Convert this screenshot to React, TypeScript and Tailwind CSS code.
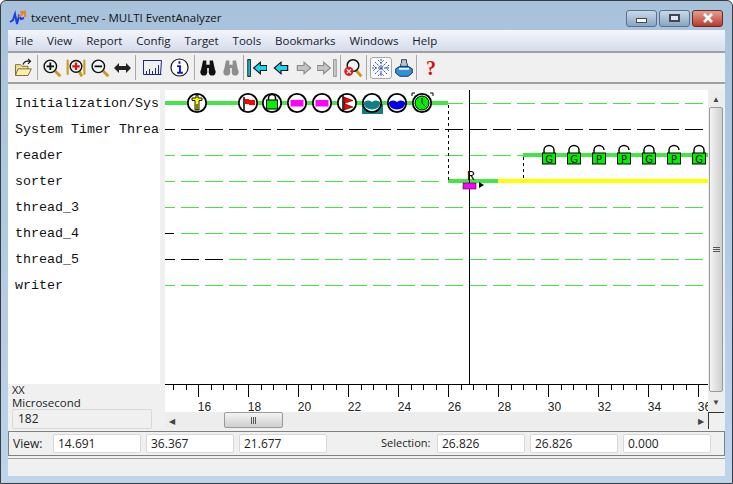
import type { ReactNode } from "react";

const threads = [
  "Initialization/System",
  "System Timer Thread",
  "reader",
  "sorter",
  "thread_3",
  "thread_4",
  "thread_5",
  "writer",
];
const menus = ["File", "View", "Report", "Config", "Target", "Tools", "Bookmarks", "Windows", "Help"];

function Glyph({ children }: { children: ReactNode }) {
  return (
    <svg width="20" height="20" viewBox="0 0 24 24" fill="none">
      {children}
    </svg>
  );
}

function Lens({ mark }: { mark: "plus" | "minus" }) {
  return (
    <Glyph>
      <path d="M16 16l6 6" stroke="#c79a1e" strokeWidth="3.500" />
      <circle cx="10" cy="10" r="7.500" fill="#eef4fb" stroke="#111" strokeWidth="1.700" />
      <path d={mark === "plus" ? "M5.500 10h9M10 5.500v9" : "M5.500 10h9"} stroke="#111" strokeWidth="2.200" />
    </Glyph>
  );
}

function Binoculars({ color }: { color: string }) {
  return (
    <Glyph>
      <path d="M6 3h4v5h4V3h4l3 14h-8v-5h-2v5H3z" fill={color} />
      <circle cx="7" cy="17" r="4" fill={color} />
      <circle cx="17" cy="17" r="4" fill={color} />
    </Glyph>
  );
}

function Arrow({ dir, fill, stroke, bar }: { dir: "l" | "r"; fill: string; stroke: string; bar?: boolean }) {
  const d = dir === "l" ? "M4 12l8-7v4h8v6h-8v4z" : "M20 12l-8-7v4H4v6h8v4z";
  const shift = bar ? (dir === "l" ? 4 : -4) : 0;
  return (
    <Glyph>
      {bar && <rect x={dir === "l" ? 1 : 20} y="2" width="3" height="20" fill={dir === "l" ? fill : "#dadada"} stroke={stroke} strokeWidth="1.200" />}
      <path d={d} fill={fill} stroke={stroke} strokeWidth="1.400" transform={`translate(${shift} 0)`} />
    </Glyph>
  );
}

function ToolBtn({ className, children }: { className: string; children: ReactNode }) {
  return <div className={`flex h-6 shrink-0 items-center justify-center ${className}`}>{children}</div>;
}

function Sep({ className = "" }: { className?: string }) {
  return <div className={`h-[25px] w-px shrink-0 bg-[#a8a8a8] ${className}`} />;
}

function Toolbar() {
  return (
    <div className="flex h-[33px] items-center border-t-2 border-b-2 border-t-[#a0a0a0] border-b-[#a0a0a0] bg-[#f0f0f0] pl-[3px]">
      <ToolBtn className="w-[24px]">
        <Glyph>
          <path d="M3 8h6l2 2h7v10H3z" fill="#f5e08a" stroke="#6a5a20" />
          <path d="M3 21l3-8h16l-4 8z" fill="#fbeeb0" stroke="#6a5a20" />
          <path d="M12 8c1-3 4-5 8-4M18 1l3 3-3 3" stroke="#222" strokeWidth="1.500" />
        </Glyph>
      </ToolBtn>
      <Sep className="mx-[2px]" />
      <ToolBtn className="w-[24px]"><Lens mark="plus" /></ToolBtn>
      <ToolBtn className="w-[24px]">
        <Glyph>
          <path d="M2 2v18M22 2v18" stroke="#c79a1e" strokeWidth="2.500" />
          <path d="M16 16l3 6" stroke="#c79a1e" strokeWidth="3.500" />
          <circle cx="12" cy="10" r="7" fill="#eef4fb" stroke="#111" strokeWidth="1.700" />
          <path d="M7.500 10h9M12 5.500v9" stroke="#e01010" strokeWidth="2.800" />
        </Glyph>
      </ToolBtn>
      <ToolBtn className="w-[23px]"><Lens mark="minus" /></ToolBtn>
      <ToolBtn className="w-[23px]">
        <svg width="17" height="10" viewBox="0 0 17 10">
          <path d="M0 5l5-5v3h7V0l5 5-5 5V7H5v3z" fill="#222" />
        </svg>
      </ToolBtn>
      <Sep className="mr-[3px] ml-px" />
      <ToolBtn className="w-[27px]">
        <svg width="19" height="15" viewBox="0 0 19 15" fill="none">
          <path d="M.5 0v14.500h18" stroke="#1a2a8a" />
          <path d="M.5 .5h18l-1 14" stroke="#1a2a8a" />
          <path d="M3.500 14v-3M6.500 14V9M9.500 14v-3M12.500 14V8M15.500 14V5" stroke="#1a2a8a" />
        </svg>
      </ToolBtn>
      <ToolBtn className="w-[27px]">
        <svg width="19" height="19" viewBox="0 0 20 20" fill="none">
          <circle cx="10" cy="10" r="9" fill="#fff" stroke="#111" strokeWidth="1.200" />
          <path d="M10 3.500v2.500M7.500 8.500h3v7M7.500 15.500h6" stroke="#1414c8" strokeWidth="2" />
        </svg>
      </ToolBtn>
      <Sep className="mr-px ml-px" />
      <ToolBtn className="w-[24px]"><Binoculars color="#111" /></ToolBtn>
      <ToolBtn className="w-[21px]"><Binoculars color="#8e8e8e" /></ToolBtn>
      <Sep className="mr-px ml-[2px]" />
      <ToolBtn className="w-[24px]"><Arrow dir="l" fill="#18d8f0" stroke="#111" bar /></ToolBtn>
      <ToolBtn className="w-[23px]"><Arrow dir="l" fill="#18d8f0" stroke="#111" /></ToolBtn>
      <ToolBtn className="w-[23px]"><Arrow dir="r" fill="#c4c4c4" stroke="#8a8a8a" /></ToolBtn>
      <ToolBtn className="w-[23px]"><Arrow dir="r" fill="#c4c4c4" stroke="#8a8a8a" bar /></ToolBtn>
      <Sep className="mr-px ml-[2px]" />
      <ToolBtn className="w-[22px]">
        <Glyph>
          <path d="M16 15l6 7" stroke="#c79a1e" strokeWidth="3.500" />
          <circle cx="12" cy="9" r="7" fill="#eef4fb" stroke="#111" strokeWidth="1.700" />
          <circle cx="7" cy="16" r="5.500" fill="#e01818" />
          <path d="M4.500 13.500l5 5M9.500 13.500l-5 5" stroke="#fff" strokeWidth="1.500" />
        </Glyph>
      </ToolBtn>
      <Sep className="mr-[3px] ml-[2px]" />
      <ToolBtn className="h-[22px] w-[22px] rounded-[3px] border border-[#a8a8a8] bg-[#fbfbfb]">
        <svg width="18" height="18" viewBox="0 0 18 18" fill="none" stroke="#2a50c8" strokeWidth="1" strokeDasharray="2 1">
          <path d="M9 0v18M0 9h18M3 3l12 12M15 3L3 15M6 1l3 3 3-3M6 17l3-3 3 3M1 6l3 3-3 3M17 6l-3 3 3 3" />
        </svg>
      </ToolBtn>
      <ToolBtn className="ml-px w-[22px]">
        <Glyph>
          <path d="M9 2h6v4l1 1v4H8V7l1-1z" fill="#b8c4d0" stroke="#223" />
          <path d="M2 13l5-3h10l5 3v5l-5 4H7l-5-4z" fill="#2f8fd8" stroke="#123" />
          <path d="M6 13h12" stroke="#eaf6ff" strokeWidth="2" />
        </Glyph>
      </ToolBtn>
      <Sep className="mr-px ml-px" />
      <ToolBtn className="w-[26px]">
        <span className="font-['Liberation_Serif',serif] text-[20px] leading-none font-bold text-[#d81010]">?</span>
      </ToolBtn>
    </div>
  );
}

const px = (n: number) => n - 165;

function Dashes({ y, color, from = 181, to = 703, head }: { y: number; color: string; from?: number; to?: number; head?: boolean }) {
  const segs: ReactNode[] = [];
  if (head) segs.push(<rect key="h" x={0} y={y} width={10} height={1} fill={color} />);
  for (let x = 181; x < to; x += 24) {
    if (x + 18 <= from) continue;
    const x0 = Math.max(x, from);
    segs.push(<rect key={x} x={px(x0)} y={y} width={Math.min(x + 18, to) - x0} height={1} fill={color} />);
  }
  return <>{segs}</>;
}

const GREEN = "#44e544";
const BRIGHT = "#00f000";

function StateIcon({ cx, children }: { cx: number; children: ReactNode }) {
  return (
    <g transform={`translate(${px(cx)} 12)`}>
      <circle r="9.200" fill="#fff" stroke="#000" strokeWidth="1.800" />
      {children}
    </g>
  );
}

function Lock({ cx, letter }: { cx: number; letter: string }) {
  const open = letter === "P";
  return (
    <g transform={`translate(${px(cx)} 63)`}>
      <path
        d={open ? "M-5 -1v-3a5 4.500 0 0 1 10 0" : "M-5 -1v-3a5 4.500 0 0 1 10 0v3"}
        fill="none"
        stroke="#000"
        strokeWidth="1.400"
      />
      <rect x="-6.500" y="-1" width="13" height="11" fill={BRIGHT} stroke="#000" />
      <text x="0" y="8.500" textAnchor="middle" className="font-['DejaVu_Sans',sans-serif] text-[10px]" fill="#000">
        {letter}
      </text>
    </g>
  );
}

const WAVE = "M-8.500 0C-6 -3 -3 -3 0 -1C3 -3 6 -3 8.500 0A8.800 8.800 0 0 1 -8.500 0Z";

function Timeline() {
  return (
    <svg width="543" height="294" viewBox="0 0 543 294" className="block bg-white">
      <g transform="translate(0 1)">
        {/* row 0 */}
        <rect x="0" y="10" width="283" height="4" fill={GREEN} />
        <Dashes y={12} color={GREEN} from={453} />
        <rect x="283" y="12" width="5" height="1" fill={GREEN} />
        {/* row 1 */}
        <Dashes y={38} color="#000" head />
        {/* row 2 */}
        <Dashes y={64} color={GREEN} to={523} head />
        <rect x={px(523)} y="62" width="185" height="4" fill={GREEN} />
        {/* row 3 */}
        <Dashes y={90} color={GREEN} to={445} head />
        <rect x={px(448)} y="88" width="50" height="4" fill={GREEN} />
        <rect x={px(498)} y="88" width="210" height="4" fill="#ffff00" />
        {/* rows 4-7 */}
        <Dashes y={116} color={GREEN} head />
        <Dashes y={142} color={GREEN} />
        <rect x="0" y="142" width="9" height="1" fill="#000" />
        <Dashes y={168} color={GREEN} from={229} />
        <rect x="0" y="168" width="10" height="1" fill="#000" />
        <rect x="16" y="168" width="18" height="1" fill="#000" />
        <rect x="40" y="168" width="18" height="1" fill="#000" />
        <Dashes y={194} color={GREEN} head />

        {/* thread switch lines */}
        <path d={`M${px(448) + 0.5} 14V90`} stroke="#000" strokeDasharray="3 3" />
        <path d={`M${px(523) + 0.5} 66V90`} stroke="#000" strokeDasharray="3 3" />

        <StateIcon cx={197}>
          <path d="M-1 -8h2v3h4v2.500h-3v9.500h-4v-9.500h-3v-2.500h4z" fill="#ffff00" stroke="#000" strokeWidth="0.900" />
          <path d="M0 1v6" stroke="#000" />
        </StateIcon>
        <StateIcon cx={248}>
          <path d="M-4 -6v13" stroke="#000" strokeWidth="1.500" />
          <path d="M-3 -4h4v1h6v5h-6v-1h-4z" fill="#ff0000" />
        </StateIcon>
        <StateIcon cx={272}>
          <path d="M-3.500 -3v-2a3.500 3.500 0 0 1 7 0v2" fill="none" stroke="#000" strokeWidth="1.500" />
          <rect x="-5.500" y="-3" width="11" height="9" fill={BRIGHT} stroke="#000" />
        </StateIcon>
        <StateIcon cx={297}>
          <rect x="-6.500" y="-3" width="13" height="6.500" fill="#ff00ff" />
        </StateIcon>
        <StateIcon cx={322}>
          <rect x="-6.500" y="-3" width="13" height="6.500" fill="#ff00ff" />
        </StateIcon>
        <StateIcon cx={347}>
          <path d="M-4 -8v16" stroke="#000" strokeWidth="1.500" />
          <path d="M-3 -6l9 3.500-9 3zM-3 0.500l9 3.500-9 3z" fill="#ff0000" stroke="#000" strokeWidth="0.500" />
        </StateIcon>
        <rect x={px(362)} y="13" width="21" height="10" fill="#0f7f86" />
        <StateIcon cx={372}>
          <path d={WAVE} fill="#0f7f86" />
        </StateIcon>
        <StateIcon cx={397}>
          <path d={WAVE} fill="#0000e8" />
        </StateIcon>
        <StateIcon cx={422}>
          <circle r="7" fill={BRIGHT} stroke="#000" strokeWidth="1" />
          <path d="M0 -5v5l4 4" stroke="#000" strokeWidth="1" fill="none" />
        </StateIcon>
        <path d={`M${px(412)} 5v-3h3M${px(433)} 5v-3h-3`} stroke="#000" fill="none" />

        {[["G", 549], ["G", 574], ["P", 599], ["P", 624], ["G", 649], ["P", 674], ["G", 699]].map(([l, x]) => (
          <Lock key={x} cx={x as number} letter={l as string} />
        ))}

        {/* cursor */}
        <rect x={px(469)} y="-1" width="1" height="294" fill="#000" />
        <text x={px(471)} y="89" textAnchor="middle" className="font-['Liberation_Mono',monospace] text-[13px]" fill="#000">
          R
        </text>
        <rect x={px(463)} y="92" width="13" height="6" fill="#ff00ff" stroke="#000" strokeWidth="0.500" />
        <path d={`M${px(479)} 91l5 3-5 3z`} fill="#000" />
      </g>
    </svg>
  );
}

function Axis() {
  const ticks: ReactNode[] = [];
  for (let i = -2; i < 44; i++) {
    const x = 33 + i * 12.5;
    if (x < 0 || x > 543) continue;
    const major = i % 4 === 0;
    ticks.push(<rect key={i} x={Math.round(x)} y="0" width="1" height={major ? 13 : 6} fill="#000" />);
  }
  const labels = [16, 18, 20, 22, 24, 26, 28, 30, 32, 34, 36];
  return (
    <svg width="543" height="28" viewBox="0 0 543 28" className="block bg-white">
      <rect x="0" y="0" width="543" height="1" fill="#000" />
      {ticks}
      {labels.map((n, i) => (
        <text
          key={n}
          x={39.5 + i * 50}
          y="27"
          textAnchor="middle"
          className="font-['Liberation_Sans',sans-serif] text-[12px]"
          fill="#222"
        >
          {n}
        </text>
      ))}
    </svg>
  );
}

function VScrollbar() {
  return (
    <div className="flex h-full w-[16px] shrink-0 flex-col items-center bg-[#ededed]">
      <div className="flex h-[17px] w-full items-center justify-center text-[8px] leading-none text-[#444]">▲</div>
      <div className="h-[285px] w-[14px] rounded-[2px] border border-[#9a9a9a] bg-gradient-to-r from-[#f4f4f4] to-[#cfcfcf]">
        <div className="flex h-full flex-col items-center justify-center gap-px">
          <div className="h-px w-[7px] bg-[#555]" />
          <div className="h-px w-[7px] bg-[#555]" />
          <div className="h-px w-[7px] bg-[#555]" />
        </div>
      </div>
      <div className="flex h-[20px] w-full items-center justify-center text-[8px] leading-none text-[#444]">▼</div>
    </div>
  );
}

function HScrollbar() {
  return (
    <div className="relative flex h-[17px] items-center justify-between bg-[#ededed] px-[4px] text-[8px] leading-none text-[#444]">
      <span>◀</span>
      <div className="absolute top-0 left-[59px] flex h-[16px] w-[59px] items-center justify-center gap-px rounded-[2px] border border-[#9a9a9a] bg-gradient-to-b from-[#f4f4f4] to-[#cfcfcf]">
        <div className="h-[7px] w-px bg-[#555]" />
        <div className="h-[7px] w-px bg-[#555]" />
        <div className="h-[7px] w-px bg-[#555]" />
      </div>
      <span>▶</span>
    </div>
  );
}

function Field({ value, className }: { value: string; className: string }) {
  return (
    <div className={`flex h-[19px] items-center rounded-[2px] border border-[#d8d8d8] bg-white pl-[4px] text-[12px] text-[#222] ${className}`}>
      {value}
    </div>
  );
}

export default function App() {
  return (
    <div className="flex h-[484px] w-[733px] flex-col overflow-hidden rounded-t-[6px] border border-[#3c3c3c] bg-gradient-to-b from-[#a8c2dc] to-[#bcd4ec] font-['Open_Sans','Liberation_Sans',sans-serif]">
      {/* Title bar */}
      <div className="flex h-[29px] shrink-0 items-center pt-[5px] pl-[8px]">
        <svg width="18" height="18" viewBox="0 0 18 18" fill="none">
          <path d="M1 13l3-2 2-6 2 10 2-8 2 3 3-1" stroke="#1c3fe0" strokeWidth="2" />
          <path d="M16 2l-6 6M11 3h5v5" stroke="#f08020" strokeWidth="2" />
        </svg>
        <span className="ml-[4px] text-[11.500px] text-[#111]">txevent_mev - MULTI EventAnalyzer</span>
        <div className="ml-auto flex gap-[2px] pr-[9px]">
          <div className="flex h-[17px] w-[31px] items-end justify-center rounded-[3px] border border-[#5a6f88] bg-gradient-to-b from-[#c9d9ea] to-[#8aa5c2] pb-[3px]">
            <div className="h-[5px] w-[11px] border border-[#445] bg-white" />
          </div>
          <div className="flex h-[17px] w-[31px] items-center justify-center rounded-[3px] border border-[#5a6f88] bg-gradient-to-b from-[#c9d9ea] to-[#8aa5c2]">
            <div className="h-[8px] w-[11px] border-2 border-[#445] bg-[#dfe8f2]" />
          </div>
          <div className="flex h-[17px] w-[31px] items-center justify-center rounded-[3px] border border-[#6e2a22] bg-gradient-to-b from-[#e0a090] to-[#b8382c]">
            <svg width="12" height="10" viewBox="0 0 12 10">
              <path d="M2 1l8 8M10 1l-8 8" stroke="#fff" strokeWidth="2.600" />
            </svg>
          </div>
        </div>
      </div>

      {/* Client area */}
      <div className="mx-[7px] flex min-h-0 flex-1 flex-col bg-[#f0f0f0]">
        <div className="flex h-[21px] shrink-0 items-center gap-[13.900px] bg-gradient-to-b from-[#f4f6fb] to-[#d6dcee] pl-[7px] text-[11.500px] text-[#1a1a2a]">
          {menus.map((m) => (
            <span key={m}>{m}</span>
          ))}
        </div>
        <Toolbar />

        <div className="mt-[6px] flex h-[339px] shrink-0">
          {/* Thread names */}
          <div className="flex w-[152px] shrink-0 flex-col">
            <div className="h-[294px] overflow-hidden bg-white pt-[1px] pl-[7px] font-['Liberation_Mono',monospace] text-[13.330px] whitespace-nowrap text-[#111]">
              {threads.map((t) => (
                <div key={t} className="flex h-[26px] items-center overflow-hidden">
                  {t}
                </div>
              ))}
            </div>
            <div className="flex flex-1 flex-col pl-[4px] text-[11.500px] leading-none text-[#222]">
              <span className="text-[11px] leading-[12px]">XX</span>
              <span className="leading-[13px]">Microsecond</span>
              <div className="flex h-[20px] w-[140px] flex-1 items-center rounded-[2px] border border-[#d8d8d8] pl-[5px] text-[12px]">182</div>
            </div>
          </div>

          {/* Chart column */}
          <div className="ml-[5px] flex min-w-0 flex-1 flex-col">
            <div className="flex h-[322px] shrink-0">
              <div className="flex w-[543px] shrink-0 flex-col">
                <Timeline />
                <Axis />
              </div>
              <VScrollbar />
            </div>
            <div className="flex">
              <div className="w-[543px] shrink-0">
                <HScrollbar />
              </div>
              <div className="h-[17px] w-[16px] border-t border-l border-[#333]" />
            </div>
          </div>
        </div>

        {/* View / selection bar */}
        <div className="mt-[2px] flex h-[25px] shrink-0 items-center border border-[#808080] pl-[4px] text-[12px] text-[#222]">
          <span className="w-[40px]">View:</span>
          <Field value="14.691" className="w-[88px]" />
          <Field value="36.367" className="ml-[5px] w-[88px]" />
          <Field value="21.677" className="ml-[5px] w-[88px]" />
          <span className="ml-[54px] w-[56px] text-[11px]">Selection:</span>
          <Field value="26.826" className="w-[88px]" />
          <Field value="26.826" className="ml-[5px] w-[88px]" />
          <Field value="0.000" className="ml-[5px] w-[88px]" />
        </div>

        <div className="mt-[2px] h-[18px] shrink-0 border-t border-[#a0a0a0] bg-[#f0f0f0]" />
      </div>
      <div className="h-[7px] shrink-0" />
    </div>
  );
}
